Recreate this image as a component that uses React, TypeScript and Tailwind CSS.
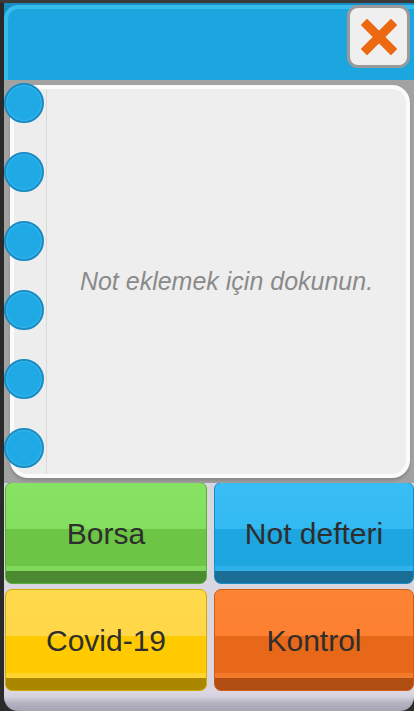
import React from 'react';

const rings = [0, 1, 2, 3, 4, 5];

const buttons = [
    {
        label: 'Borsa',
        className:
            'border-[#5aae3a] bg-[linear-gradient(to_bottom,#88e264_0,#84df60_46%,#6dc545_46%,#6dc545_83%,#7fd85a_83%,#7fd85a_88%,#4b8a30_88%,#4b8a30_100%)]',
    },
    {
        label: 'Not defteri',
        className:
            'border-[#1a8cc4] bg-[linear-gradient(to_bottom,#38bdf4_0,#34baf2_46%,#1ea6e0_46%,#1ea6e0_83%,#2fb2ea_83%,#2fb2ea_88%,#1a6e96_88%,#1a6e96_100%)]',
    },
    {
        label: 'Covid-19',
        className:
            'border-[#d4aa00] bg-[linear-gradient(to_bottom,#ffda4c_0,#ffd748_46%,#ffcb00_46%,#ffcb00_83%,#ffd430_83%,#ffd430_88%,#ab8700_88%,#ab8700_100%)]',
    },
    {
        label: 'Kontrol',
        className:
            'border-[#d05c14] bg-[linear-gradient(to_bottom,#fd8334_0,#fc8030_46%,#e76818_46%,#e76818_83%,#f47a2c_83%,#f47a2c_88%,#af4d12_88%,#af4d12_100%)]',
    },
];

const App: React.FC = () => {
    return (
        <div
            className="w-[414px] h-[711px] overflow-hidden bg-[#2c2c2c] flex flex-col"
            style={{ fontFamily: '"Liberation Sans", Arial, sans-serif' }}
        >
            <div className="h-[3px] bg-[#3a3a3a]" />
            <div className="flex flex-1">
                <div className="w-[4px] bg-[#2a2a2a]" />
                <div className="w-[410px] flex flex-col">
                    {/* header */}
                    <div className="h-[77px] bg-[#1a8cc2] pt-[2px] relative">
                        <div className="h-full rounded-tl-[14px] border-[4px] border-b-0 border-r-0 border-[#36bdee] bg-[#1ca6e0]" />
                        <button className="absolute right-[4px] top-[2px] w-[63px] h-[63px] rounded-[11px] border-[3px] border-[#9a9a9a] bg-[#efefef] flex items-center justify-center">
                            <svg width="36" height="36" viewBox="0 0 36 36">
                                <path
                                    d="M6 6 L30 30 M30 6 L6 30"
                                    stroke="#ec6912"
                                    strokeWidth="9"
                                    strokeLinecap="square"
                                />
                            </svg>
                        </button>
                    </div>

                    {/* notebook */}
                    <div className="h-[403px] bg-[#a2a2a2] pt-[5px] pl-[6px] pr-[4px] pb-[5px] relative">
                        <div className="h-full rounded-[18px] border-[4px] border-[#fbfbfb] bg-[#eeeeee] flex overflow-hidden shadow-[0_3px_3px_rgba(0,0,0,0.15)]">
                            <div className="w-[33px] border-r border-[#dadada] bg-[#ededed]" />
                            <div className="flex-1 flex items-center justify-center">
                                <span className="italic text-[25px] text-[#8a8a8a]">
                                    Not eklemek için dokunun.
                                </span>
                            </div>
                        </div>
                        <div className="absolute left-0 top-[3px] flex flex-col gap-[29px]">
                            {rings.map(i => (
                                <div
                                    key={i}
                                    className="w-[40px] h-[40px] rounded-full bg-[#1fa9e5] border-[2px] border-[#1a8cc4] shadow-[inset_0_0_0_1px_#3cb8ee]"
                                />
                            ))}
                        </div>
                    </div>

                    {/* buttons */}
                    <div className="bg-[#d9d5e1] pl-[1px] grid grid-cols-[202px_200px] gap-x-[7px] gap-y-[5px] -mt-[1px]">
                        {buttons.map(b => (
                            <button
                                key={b.label}
                                className={`h-[102px] rounded-[7px] border flex items-center justify-center text-[30px] text-[#2e2e2e] ${b.className}`}
                            >
                                {b.label}
                            </button>
                        ))}
                    </div>

                    {/* bottom tray */}
                    <div className="flex-1 bg-[linear-gradient(to_bottom,#dcd8e4_0,#d4d0dc_30%,#b4b2c0_60%,#a6a4b2_100%)] rounded-b-[14px]" />
                </div>
            </div>
        </div>
    );
};

export default App;
